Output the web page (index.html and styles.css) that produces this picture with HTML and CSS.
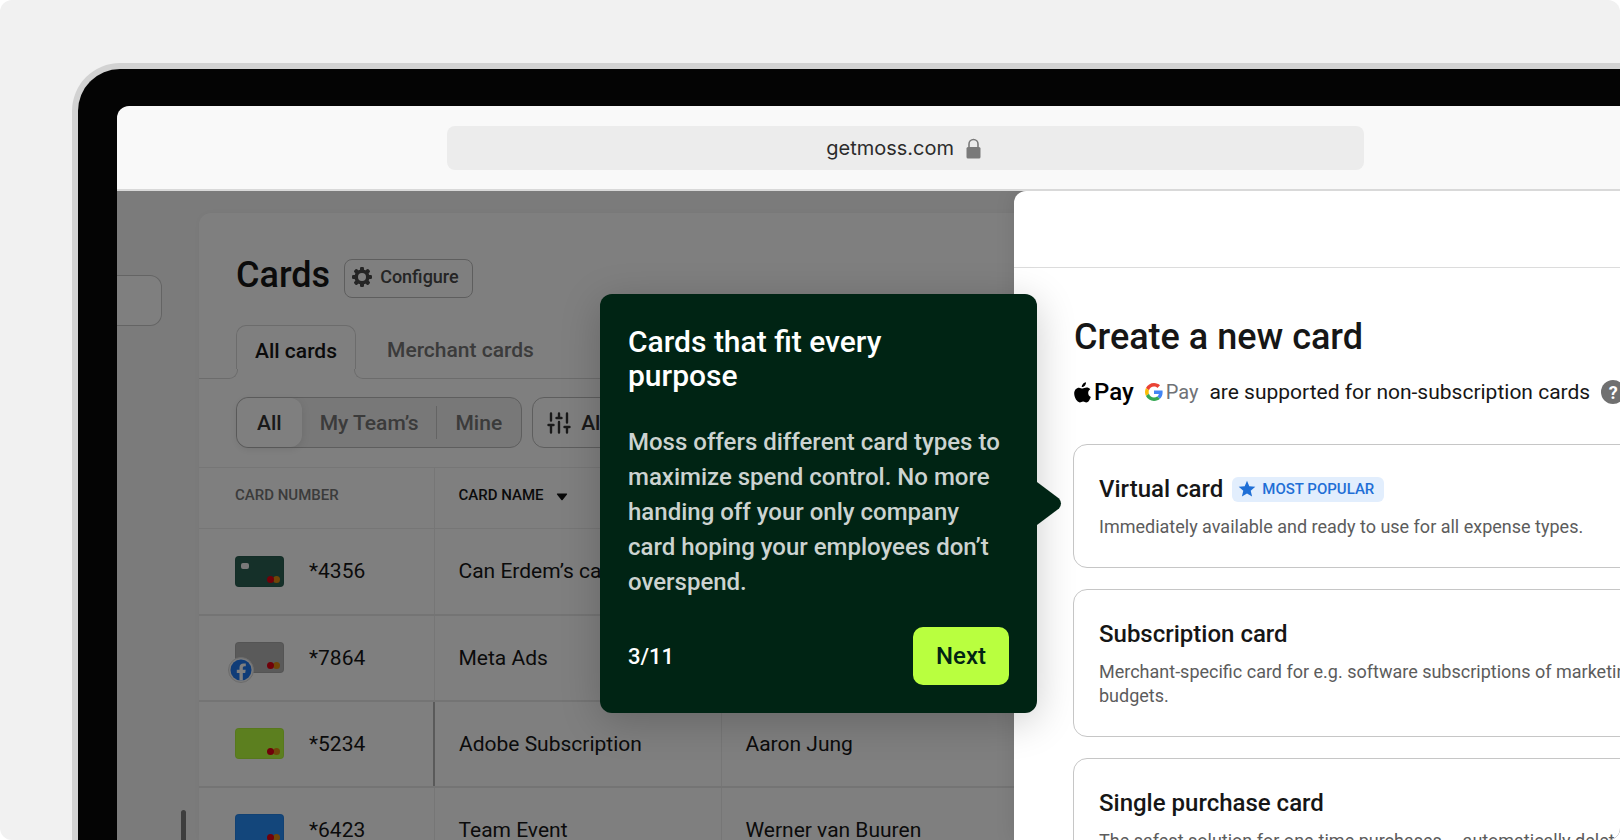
FILE: index.html
```html
<!DOCTYPE html>
<html lang="en">
<head>
    <meta charset="UTF-8">
    <meta name="viewport" content="width=device-width, initial-scale=1.0">
    <title>Cards - Moss</title>
    <link rel="stylesheet" href="styles.css">
</head>
<body>
    <!-- Shared icons -->
    <svg class="sprite" aria-hidden="true">
        <symbol id="mastercard" viewBox="0 0 13 7">
            <circle cx="9.5" cy="3.5" r="3.5" fill="#e08a10"/>
            <circle cx="3.5" cy="3.5" r="3.5" fill="#e00012"/>
        </symbol>
    </svg>

    <div class="stage">
        <div class="laptop">
            <div class="screen">
                <div class="toolbar">
                    <label class="address-bar">
                        <input type="text" class="address" value="getmoss.com" aria-label="Address">
                        <svg width="15" height="21" viewBox="0 0 15 21">
                            <path d="M3 10V6a4.5 4.5 0 0 1 9 0v4" fill="none" stroke="#7a7a7a" stroke-width="1.6"/>
                            <rect x="0.5" y="9" width="14" height="11.5" rx="1.5" fill="#7a7a7a"/>
                        </svg>
                    </label>
                </div>

                <div class="app">
                    <aside class="sidebar">
                        <input type="text" class="sidebar-search" aria-label="Search">
                        <div class="scroll-thumb"></div>
                    </aside>

                    <main class="panel">
                        <header class="panel-header">
                            <h1>Cards</h1>
                            <button class="configure">
                                <svg width="20" height="20" viewBox="0 0 20 20">
                                    <g fill="#4a4a4a">
                                        <rect x="8" y="0" width="4" height="20" rx="1.2"/>
                                        <rect x="8" y="0" width="4" height="20" rx="1.2" transform="rotate(45 10 10)"/>
                                        <rect x="8" y="0" width="4" height="20" rx="1.2" transform="rotate(90 10 10)"/>
                                        <rect x="8" y="0" width="4" height="20" rx="1.2" transform="rotate(135 10 10)"/>
                                        <circle cx="10" cy="10" r="7.6"/>
                                    </g>
                                    <circle cx="10" cy="10" r="4" fill="#fff"/>
                                </svg>
                                Configure
                            </button>
                        </header>

                        <div class="tabs" role="tablist">
                            <button class="tab active" role="tab" aria-selected="true">All cards</button>
                            <button class="tab" role="tab" aria-selected="false">Merchant cards</button>
                        </div>

                        <div class="filters">
                            <div class="segments">
                                <button class="segment selected">All</button>
                                <button class="segment">My Team’s</button>
                                <button class="segment last">Mine</button>
                            </div>
                            <button class="filter-button">
                                <svg width="24" height="22" viewBox="0 0 24 22" fill="none" stroke="#333" stroke-width="2.4" stroke-linecap="round">
                                    <path d="M4 1.5v7M4 13v7.5M1.5 13h5M12 1.5v4.5M12 10v10.5M9.5 6h5M20 1.5v9M20 15v5.5M17.5 15h5"/>
                                </svg>
                                All
                            </button>
                        </div>

                        <table class="cards-table">
                            <colgroup>
                                <col class="col-number">
                                <col class="col-name">
                                <col>
                            </colgroup>
                            <thead>
                                <tr>
                                    <th>CARD NUMBER</th>
                                    <th class="sorted">
                                        <button class="sort">
                                            CARD NAME
                                            <svg width="12" height="8" viewBox="0 0 12 8"><path d="M1.5.5h9a.6.6 0 0 1 .5 1L6.6 7a.8.8 0 0 1-1.2 0L1 1.5a.6.6 0 0 1 .5-1z" fill="#111"/></svg>
                                        </button>
                                    </th>
                                    <th></th>
                                </tr>
                            </thead>
                            <tbody>
                                <tr>
                                    <td><div class="number"><span class="mini-card green"><span class="chip"></span><svg class="mc"><use href="#mastercard"/></svg></span>*4356</div></td>
                                    <td>Can Erdem’s card</td>
                                    <td></td>
                                </tr>
                                <tr>
                                    <td><div class="number">
                                        <span class="mini-card gray">
                                            <svg class="mc"><use href="#mastercard"/></svg>
                                            <svg class="merchant" viewBox="0 0 26 26">
                                                <circle cx="13" cy="13" r="12.5" fill="#f4f4f4" stroke="#d8d8d8"/>
                                                <circle cx="13" cy="13" r="10.5" fill="#1f78f0"/>
                                                <path d="M11.5 23.4v-7.5H8.800v-3.1h2.700v-2.3c0-2.700 1.600-4.100 4-4.100.9 0 1.800.1 2.300.2v2.600h-1.300c-1.300 0-1.700.8-1.700 1.600v2h2.900l-.5 3.100h-2.400v7.500a10 10 0 0 1-3.300 0z" fill="#fff"/>
                                            </svg>
                                        </span>*7864</div></td>
                                    <td>Meta Ads</td>
                                    <td></td>
                                </tr>
                                <tr class="focused">
                                    <td><div class="number"><span class="mini-card lime"><svg class="mc"><use href="#mastercard"/></svg></span>*5234</div></td>
                                    <td>Adobe Subscription</td>
                                    <td>Aaron Jung</td>
                                </tr>
                                <tr>
                                    <td><div class="number"><span class="mini-card blue"><svg class="mc"><use href="#mastercard"/></svg></span>*6423</div></td>
                                    <td>Team Event</td>
                                    <td>Werner van Buuren</td>
                                </tr>
                            </tbody>
                        </table>
                    </main>

                    <div class="backdrop"></div>

                    <section class="drawer">
                        <div class="drawer-top"></div>
                        <div class="drawer-body">
                            <h2>Create a new card</h2>
                            <div class="wallets">
                                <span class="apple-pay">
                                    <svg width="17" height="21" viewBox="0 0 17 21">
                                        <path d="M12 .3c.1 1.3-.4 2.5-1.2 3.4-.8.9-1.9 1.5-3 1.4-.2-1.2.4-2.4 1.1-3.2C9.7 1 11 .4 12 .3z"/>
                                        <path d="M16.3 7.3c-1.4.9-2.1 2.1-2.1 3.7 0 1.9 1 3.2 2.6 3.9-.9 2.4-2.4 5.5-4.5 5.500-1.3 0-1.700-.8-3.200-.8s-2 .8-3.200.8C3.200 20.500.2 15.700.2 11.600.2 8 2.500 5.700 5 5.700c1.400 0 2.500.9 3.600.9 1 0 2.200-1 4-1 1.400 0 2.800.6 3.700 1.700z"/>
                                    </svg>
                                    Pay
                                </span>
                                <span class="google-pay">
                                    <svg width="18" height="18" viewBox="0 0 48 48">
                                        <path fill="#ea4335" d="M24 9.500c3.540 0 6.710 1.220 9.210 3.600l6.850-6.850C35.900 2.380 30.470 0 24 0 14.620 0 6.510 5.380 2.560 13.220l7.980 6.190C12.430 13.720 17.740 9.500 24 9.500z"/>
                                        <path fill="#4285f4" d="M46.980 24.550c0-1.570-.15-3.090-.38-4.550H24v9.020h12.940c-.58 2.960-2.260 5.480-4.780 7.180l7.730 6c4.510-4.180 7.090-10.360 7.090-17.650z"/>
                                        <path fill="#fbbc05" d="M10.530 28.590c-.48-1.450-.76-2.990-.76-4.590s.27-3.140.76-4.590l-7.980-6.190C.92 16.460 0 20.120 0 24s.92 7.540 2.560 10.780l7.970-6.190z"/>
                                        <path fill="#34a853" d="M24 48c6.480 0 11.930-2.130 15.890-5.810l-7.730-6c-2.150 1.450-4.920 2.300-8.160 2.300-6.260 0-11.570-4.220-13.470-9.910l-7.980 6.190C6.510 42.620 14.620 48 24 48z"/>
                                    </svg>
                                    Pay
                                </span>
                                <span class="wallets-text">are supported for non-subscription cards</span>
                                <button class="help" aria-label="Help">?</button>
                            </div>

                            <div class="options">
                                <button class="option">
                                    <span class="option-title">Virtual card
                                        <span class="badge">
                                            <svg width="18" height="18" viewBox="0 0 18 18"><path d="M9 .8l2.300 5.500 6 .5-4.600 3.900 1.400 5.800L9 13.400l-5.100 3.100 1.400-5.800L.7 6.800l6-.5z" fill="#1f6fd6"/></svg>
                                            MOST POPULAR
                                        </span>
                                    </span>
                                    <span class="option-text">Immediately available and ready to use for all expense types.</span>
                                </button>
                                <button class="option">
                                    <span class="option-title">Subscription card</span>
                                    <span class="option-text">Merchant-specific card for e.g. software subscriptions of marketing<br>budgets.</span>
                                </button>
                                <button class="option">
                                    <span class="option-title">Single purchase card</span>
                                    <span class="option-text">The safest solution for one-time purchases – automatically deleted<br>after use.</span>
                                </button>
                            </div>
                        </div>
                    </section>

                    <div class="tour" role="dialog" aria-labelledby="tourTitle">
                        <h3 id="tourTitle">Cards that fit every purpose</h3>
                        <p>Moss offers different card types to maximize spend control. No more handing off your only company card hoping your employees don’t overspend.</p>
                        <div class="tour-footer">
                            <span>3/11</span>
                            <button class="next">Next</button>
                        </div>
                        <svg class="tour-arrow" width="25" height="44" viewBox="0 0 25 44"><path d="M0 0l22 16.500q4 5 0 10L0 43z" fill="#002414"/></svg>
                    </div>
                </div>
            </div>
        </div>
    </div>
</body>
</html>
```
FILE: styles.css
```css
:root {
    --text: #161616;
    --muted: #5c5c5c;
    --line: #ececec;
    --border: #c8c8c8;
    --tour-bg: #002414;
    --lime: #b9ff3f;
}

* {
    box-sizing: border-box;
}

body {
    margin: 0;
    font-family: Roboto, "Liberation Sans", sans-serif;
    font-size: 20px;
    color: var(--text);
    background-color: #fff;
}

h1, h2, h3, p {
    margin: 0;
    font-weight: 500;
}

button, input {
    font: inherit;
    color: inherit;
    background: none;
    border: none;
    padding: 0;
}

button {
    cursor: pointer;
}

svg {
    flex: none;
}

.sprite {
    position: absolute;
    width: 0;
    height: 0;
}

/* Laptop frame */
.stage {
    display: flex;
    height: 100vh;
    padding: 63px 0 0 72px;
    background-color: #f1f1f1;
    border-radius: 12px;
    overflow: hidden;
}

.laptop {
    flex: 1;
    display: flex;
    margin-right: -80px;
    padding: 37px 0 0 39px;
    background-color: #040404;
    border: solid #d2d2d2;
    border-width: 6px 0 0 6px;
    border-top-left-radius: 48px;
}

.screen {
    flex: 1;
    display: flex;
    flex-direction: column;
    background-color: #f9f9f9;
    border-top-left-radius: 12px;
    overflow: hidden;
}

.toolbar {
    padding: 20px 336px 19px 330px;
    border-bottom: 2px solid #d9d9d9;
}

.address-bar {
    display: flex;
    align-items: center;
    justify-content: center;
    gap: 12px;
    height: 44px;
    padding-right: 8px;
    background-color: #ececec;
    border-radius: 8px;
}

.address {
    width: 132px;
    font-family: Inter, sans-serif;
    font-size: 20px;
    text-align: right;
    color: #2c2c2c;
}

/* App */
.app {
    position: relative;
    flex: 1;
    display: flex;
    min-height: 0;
    background-color: #f7f7f7;
    overflow: hidden;
}

.sidebar {
    position: relative;
    width: 82px;
    padding-top: 84px;
}

.sidebar-search {
    display: block;
    width: 45px;
    height: 51px;
    background-color: #fff;
    border: 1px solid var(--border);
    border-left: none;
    border-radius: 0 12px 12px 0;
}

.scroll-thumb {
    position: absolute;
    right: 13px;
    bottom: -40px;
    width: 5px;
    height: 70px;
    background-color: #7c7c7c;
    border-radius: 3px;
}

.panel {
    flex: 1;
    margin-top: 22px;
    background-color: #fff;
    border-top-left-radius: 12px;
    box-shadow: 0 0 8px rgba(0, 0, 0, 0.04);
}

.panel-header {
    display: flex;
    align-items: center;
    gap: 14px;
    padding: 39px 37px 27px;
}

h1 {
    font-size: 36px;
    line-height: 46px;
}

.configure {
    display: flex;
    align-items: center;
    gap: 8px;
    height: 39px;
    margin-top: 6px;
    padding: 0 13px 3px 7px;
    border: 1px solid #bcbcbc;
    border-radius: 8px;
    font-size: 18px;
    font-weight: 500;
    color: #4a4a4a;
}

.tabs {
    display: flex;
    padding-left: 37px;
    border-bottom: 1px solid #d8d8d8;
    font-size: 21px;
}

.tab {
    height: 53px;
    padding: 0 31px 3px;
    font-weight: 500;
    color: #767676;
}

.tab.active {
    position: relative;
    height: 54px;
    margin-bottom: -1px;
    padding: 0 18px 4px;
    background-color: #fff;
    border: 1px solid #d8d8d8;
    border-bottom: none;
    border-radius: 10px 10px 0 0;
    color: var(--text);
}

/* Flared corners where the active tab meets the line */
.tab.active::before,
.tab.active::after {
    content: "";
    position: absolute;
    bottom: 0;
    width: 9px;
    height: 9px;
    background-color: #fff;
    border-bottom: 1px solid #d8d8d8;
}

.tab.active::before {
    left: -9px;
    border-right: 1px solid #d8d8d8;
    border-bottom-right-radius: 9px;
    box-shadow: 2px 2px 0 #fff;
}

.tab.active::after {
    right: -9px;
    border-left: 1px solid #d8d8d8;
    border-bottom-left-radius: 9px;
    box-shadow: -2px 2px 0 #fff;
}

.filters {
    display: flex;
    gap: 10px;
    padding: 18px 37px 19px;
    font-size: 21px;
}

.segments {
    display: flex;
    height: 51px;
    background-color: #f0f0f0;
    border: 1px solid #bcbcbc;
    border-radius: 12px;
}

.segment {
    padding: 0 18px;
    font-weight: 500;
    color: #767676;
}

.segment.selected {
    padding: 0 20px;
    background-color: #fff;
    border-radius: 12px;
    box-shadow: 0 2px 8px rgba(0, 0, 0, 0.1);
    color: #333;
}

.segment.last {
    position: relative;
    padding: 0 19px;
}

.segment.last::before {
    content: "";
    position: absolute;
    left: 0;
    top: 8px;
    bottom: 8px;
    width: 1px;
    background-color: var(--border);
}

.filter-button {
    display: flex;
    align-items: center;
    gap: 10px;
    padding: 0 14px;
    border: 1px solid #bcbcbc;
    border-radius: 12px;
    font-weight: 500;
    color: #333;
}

/* Table */
.cards-table {
    width: 100%;
    table-layout: fixed;
    border-collapse: collapse;
    border-top: 1px solid var(--line);
    font-size: 21px;
}

.col-number {
    width: 235px;
}

.col-name {
    width: 287px;
}

th, td {
    padding: 0 24px;
    border-right: 1px solid var(--line);
    text-align: left;
}

th:first-child,
td:first-child {
    padding-left: 36px;
}

th {
    height: 61px;
    padding-bottom: 6px;
    border-bottom: 1px solid var(--line);
    font-size: 15px;
    font-weight: 500;
    color: #767676;
}

.sorted {
    color: var(--text);
}

.sort {
    display: flex;
    align-items: center;
    gap: 12px;
}

.sort svg {
    margin-top: 4px;
}

td {
    height: 86px;
    border-bottom: 2px solid #e8e8e8;
}

.focused td:first-child {
    border-right: 2px solid #b4b4b4;
}

.number {
    display: flex;
    align-items: center;
    gap: 25px;
}

.mini-card {
    position: relative;
    width: 49px;
    height: 31px;
    border-radius: 4px;
    box-shadow: inset 0 0 0 1px rgba(0, 0, 0, 0.06);
}

.mini-card.green { background-color: #2a6053; }
.mini-card.gray { background-color: #b4b4b4; }
.mini-card.lime { background-color: #b9ff3f; }
.mini-card.blue { background-color: #268cf6; }

.chip {
    position: absolute;
    left: 6px;
    top: 7px;
    width: 8px;
    height: 6px;
    background-color: #f2f2f2;
    border-radius: 2px;
}

.mc {
    position: absolute;
    right: 4px;
    bottom: 4px;
    width: 13px;
    height: 7px;
}

.merchant {
    position: absolute;
    left: -7px;
    bottom: -10px;
    width: 26px;
    height: 26px;
}

.backdrop {
    position: absolute;
    inset: 0;
    background-color: rgba(0, 0, 0, 0.5);
}

/* Drawer */
.drawer {
    position: absolute;
    top: 0;
    right: 0;
    bottom: 0;
    left: 897px;
    background-color: #fff;
    border-top-left-radius: 12px;
    box-shadow: 0 0 20px rgba(0, 0, 0, 0.1);
    overflow: hidden;
}

.drawer-top {
    height: 77px;
    border-bottom: 1px solid #dcdcdc;
}

.drawer-body {
    padding: 45px 36px 0 59px;
}

h2 {
    padding-left: 1px;
    font-size: 36px;
    line-height: 48px;
}

.wallets {
    display: flex;
    align-items: center;
    gap: 11px;
    height: 28px;
    margin: 17px 0 38px;
    padding-left: 1px;
    white-space: nowrap;
}

.apple-pay, .google-pay {
    display: flex;
    align-items: center;
    gap: 3px;
}

.apple-pay {
    font-size: 24px;
    font-weight: 500;
    color: #000;
}

.google-pay {
    font-size: 20px;
    color: #6f7276;
}

.wallets-text {
    font-size: 21px;
}

.help {
    width: 24px;
    height: 24px;
    border-radius: 50%;
    background-color: #707070;
    color: #fff;
    font-size: 18px;
    font-weight: 700;
}

.options {
    display: flex;
    flex-direction: column;
    gap: 21px;
}

.option {
    display: flex;
    flex-direction: column;
    gap: 10px;
    padding: 28px 25px;
    border: 1px solid #c6c6c6;
    border-radius: 14px;
    text-align: left;
}

.option-title {
    display: flex;
    align-items: center;
    gap: 9px;
    font-size: 24px;
    font-weight: 500;
    line-height: 32px;
}

.badge {
    display: flex;
    align-items: center;
    gap: 6px;
    height: 25px;
    padding: 0 10px 0 6px;
    border-radius: 6px;
    background-color: #e2eefd;
    color: #1f6fd6;
    font-size: 15px;
}

.option-text {
    font-size: 18px;
    line-height: 24px;
    color: var(--muted);
    white-space: nowrap;
}

/* Product tour popover */
.tour {
    position: absolute;
    left: 483px;
    top: 103px;
    width: 437px;
    padding: 31px 28px 28px;
    border-radius: 12px;
    background-color: var(--tour-bg);
    box-shadow: 0 8px 40px rgba(0, 0, 0, 0.2);
    color: #fff;
}

.tour h3 {
    padding-right: 60px;
    font-size: 30px;
    line-height: 34px;
}

.tour p {
    margin: 32px 0 27px;
    font-size: 24px;
    line-height: 35px;
    color: #ccd3d0;
}

.tour-footer {
    display: flex;
    align-items: center;
    justify-content: space-between;
    font-size: 22px;
    font-weight: 500;
}

.next {
    height: 58px;
    padding: 0 23px;
    border-radius: 10px;
    background-color: var(--lime);
    color: var(--tour-bg);
    font-size: 24px;
}

.tour-arrow {
    position: absolute;
    left: 100%;
    top: 188px;
}
```
